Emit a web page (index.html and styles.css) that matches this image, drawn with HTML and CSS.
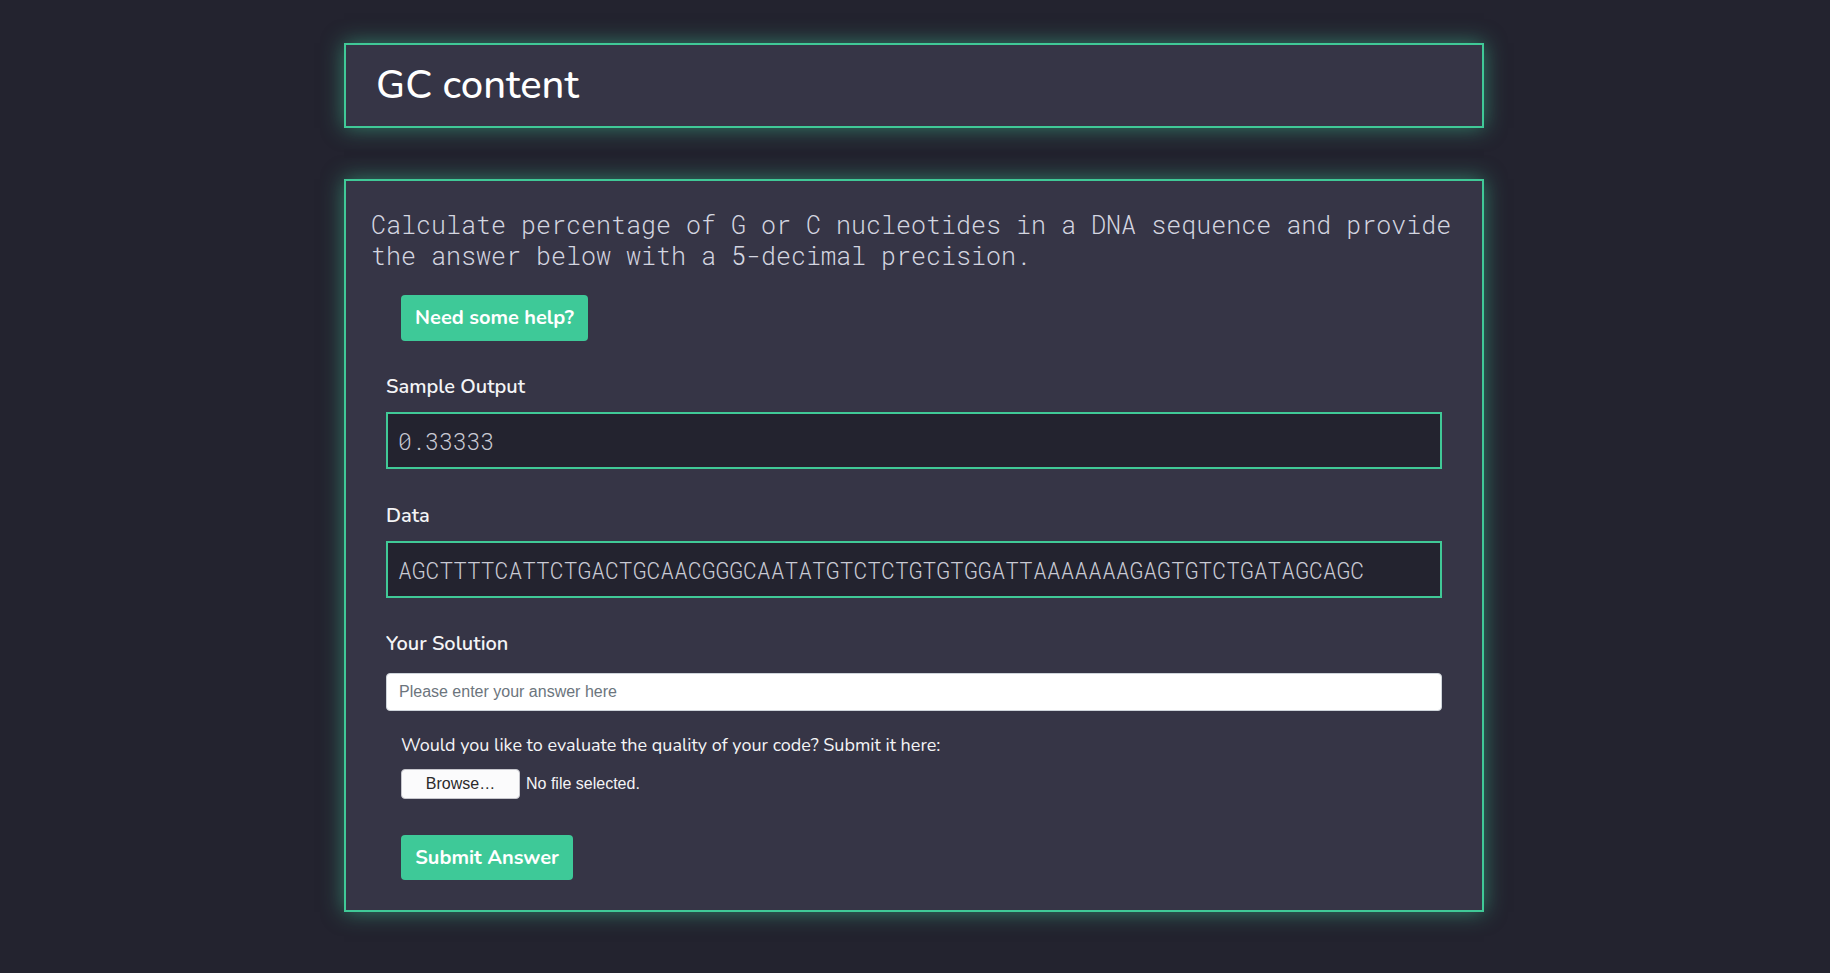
FILE: index.html
```html
<!DOCTYPE html>
<html lang="en">
<head>
<meta charset="utf-8">
<title>GC content</title>
<link rel="stylesheet" href="styles.css">
</head>
<body>
<div class="container">
  <header class="panel title-panel">
    <h1 class="title">GC content</h1>
  </header>
  <main class="panel main-panel">
    <p class="description">Calculate percentage of G or C nucleotides in a DNA sequence and provide the answer below with a 5-decimal precision.</p>
    <button class="btn btn-help" type="button">Need some help?</button>
    <form class="task-form">
      <div class="group">
        <label class="field-label">Sample Output</label>
        <div class="code-box">0.33333</div>
      </div>
      <div class="group">
        <label class="field-label">Data</label>
        <div class="code-box">AGCTTTTCATTCTGACTGCAACGGGCAATATGTCTCTGTGTGGATTAAAAAAAGAGTGTCTGATAGCAGC</div>
      </div>
      <div class="group group-solution">
        <label class="field-label">Your Solution</label>
        <input class="answer-input" type="text" placeholder="Please enter your answer here">
      </div>
      <div class="upload">
        <p class="upload-text">Would you like to evaluate the quality of your code? Submit it here:</p>
        <div class="file-row">
          <span class="browse">Browse…</span>
          <span class="file-status">No file selected.</span>
        </div>
      </div>
      <button class="btn btn-submit" type="button">Submit Answer</button>
    </form>
  </main>
</div>
</body>
</html>
```
FILE: styles.css
```css
* {
  box-sizing: border-box;
}

html, body {
  margin: 0;
  padding: 0;
}

body {
  background: #23232f;
  font-family: "Nunito", "Lato", "Noto Sans", sans-serif;
  color: #f4f4f6;
  min-height: 973px;
  padding-right: 2px;
}

.container {
  width: 1140px;
  margin: 0 auto;
  padding-top: 43px;
}

.panel {
  background: #363546;
  border: 2px solid #40c997;
  box-shadow: 0 0 20px rgba(64, 201, 151, 0.55);
}

.title-panel {
  height: 85px;
  display: flex;
  align-items: center;
  padding: 0 30px;
  margin-bottom: 51px;
}

.title {
  margin: 0;
  font-size: 40px;
  font-weight: 500;
  color: #ffffff;
  line-height: 1;
  padding-bottom: 2px;
}

.main-panel {
  height: 733px;
  padding: 28px 25px 30px 25px;
}

.description {
  margin: 0;
  font-family: "Roboto Mono", "DejaVu Sans Mono", monospace;
  font-weight: 300;
  font-size: 25px;
  line-height: 31px;
  color: #d4d6e0;
}

.btn {
  display: block;
  border: none;
  border-radius: 4px;
  background: #3ec998;
  color: #ffffff;
  font-family: "Nunito", "Lato", "Noto Sans", sans-serif;
  font-weight: 700;
  font-size: 20px;
  line-height: 24px;
  margin-left: 30px;
  padding: 0;
}

.btn-help {
  margin-top: 24px;
  width: 187px;
  height: 46px;
}

.task-form {
  margin: 33px 15px 0 15px;
}

.group {
  margin-bottom: 34px;
}

.field-label {
  display: block;
  font-size: 20px;
  font-weight: 600;
  line-height: 24px;
  color: #f4f4f6;
  padding-top: 1px;
  margin-bottom: 13px;
}

.code-box {
  height: 57px;
  background: #23232f;
  border: 2px solid #40c997;
  padding: 0 10px;
  display: flex;
  align-items: center;
  font-family: "Roboto Mono", "DejaVu Sans Mono", monospace;
  font-weight: 300;
  font-size: 23px;
  color: #c9cad4;
  white-space: nowrap;
  overflow: hidden;
}

.group-solution {
  margin-top: -1px;
  margin-bottom: 23px;
}

.group-solution .field-label {
  margin-bottom: 17px;
}

.answer-input {
  display: block;
  width: 100%;
  height: 38px;
  background: #ffffff;
  border: 1px solid #ced4da;
  border-radius: 4px;
  padding: 0 12px;
  font-family: "Liberation Sans", Arial, sans-serif;
  font-size: 16px;
  color: #495057;
}

.answer-input::placeholder {
  color: #6c757d;
}

.upload {
  margin-left: 15px;
}

.upload-text {
  margin: 0;
  font-size: 18px;
  line-height: 22px;
  color: #f4f4f6;
}

.file-row {
  display: flex;
  align-items: center;
  gap: 6px;
  margin-top: 13px;
}

.browse {
  width: 119px;
  height: 30px;
  display: flex;
  align-items: center;
  justify-content: center;
  background: #fbfbfc;
  border: 1px solid #c6c6cc;
  border-radius: 4px;
  font-family: "Liberation Sans", Arial, sans-serif;
  font-size: 16px;
  color: #2b2b2b;
}

.file-status {
  font-family: "Liberation Sans", Arial, sans-serif;
  font-size: 16px;
  color: #f4f4f6;
}

.btn-submit {
  margin-top: 36px;
  margin-left: 15px;
  width: 172px;
  height: 45px;
}
```
